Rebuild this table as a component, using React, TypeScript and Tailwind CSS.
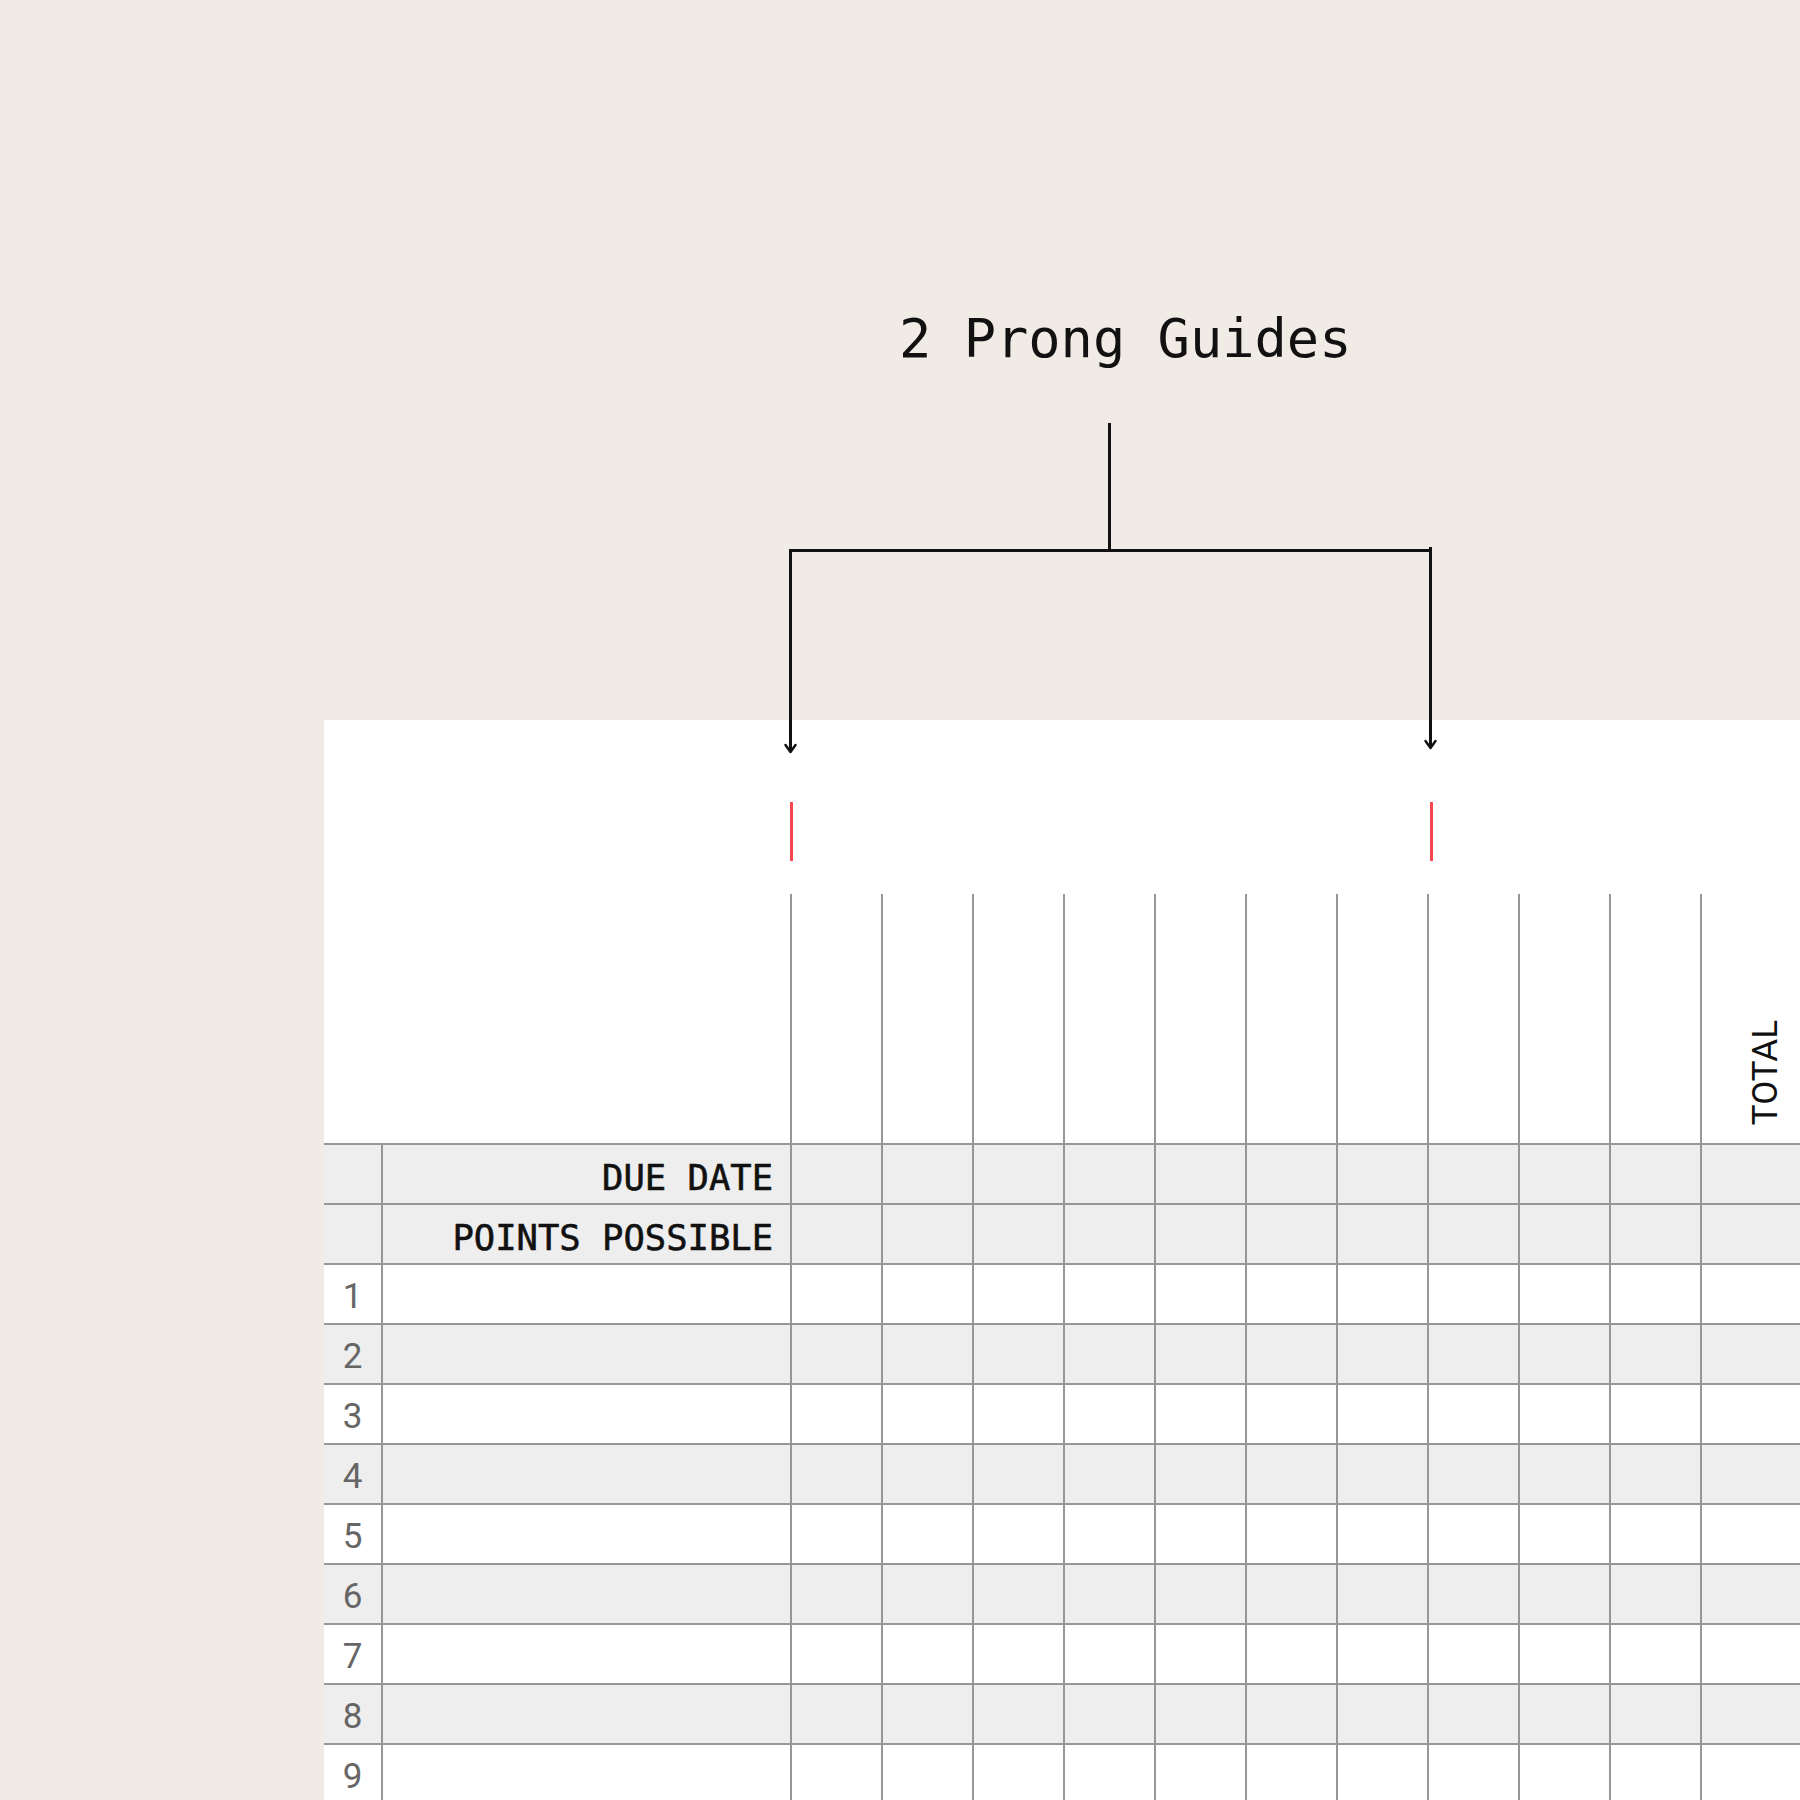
import { ReactNode } from "react";

const LINE = "border-[#979797]";
const dataCols = Array.from({ length: 11 }, (_, i) => i);
const numbers = [1, 2, 3, 4, 5, 6, 7, 8, 9];

// bracket with two arrows pointing at the guide marks
const Bracket = () => (
  <svg
    className="absolute left-0 top-0"
    width="1800"
    height="800"
    viewBox="0 0 1800 800"
    fill="none"
  >
    <g stroke="#111" strokeWidth="3">
      <line x1="1109.5" y1="423" x2="1109.5" y2="551" />
      <line x1="790" y1="550.5" x2="1431.5" y2="550.5" />
      <line x1="790.5" y1="549" x2="790.5" y2="751" />
      <line x1="1430.5" y1="547" x2="1430.5" y2="747" />
    </g>
    <g stroke="#111" strokeWidth="2.5" strokeLinecap="round" strokeLinejoin="round">
      <polyline points="785.5,745 790.5,752 795.5,745" />
      <polyline points="1425.5,741 1430.5,748 1435.5,741" />
    </g>
  </svg>
);

const Row = ({ gray, num, label }: { gray: boolean; num?: ReactNode; label?: string }) => (
  <div className={`flex h-[60px] shrink-0 border-t-2 ${LINE} ${gray ? "bg-[#efeeef]" : "bg-white"}`}>
    <div className="w-[57px] shrink-0 flex items-center justify-center font-['Roboto',sans-serif] text-[35px] leading-none text-[#666] pt-[4px]">
      {num}
    </div>
    <div
      className={`w-[409px] shrink-0 border-l-2 ${LINE} flex items-center justify-end pr-[17px] pt-[8px] font-['DejaVu_Sans_Mono',monospace] text-[35.5px] leading-none text-[#111] [-webkit-text-stroke:0.6px_#111]`}
    >
      {label}
    </div>
    {dataCols.map((c) => (
      <div key={c} className={`w-[91px] shrink-0 border-l-2 ${LINE}`} />
    ))}
    <div className="flex-1" />
  </div>
);

export default function App() {
  return (
    <div className="relative w-[1800px] h-[1800px] overflow-hidden bg-[#f0ece5] flex flex-col">
      <div className="h-[720px] shrink-0 pt-[312px] pl-[899px]">
        <div className="font-['DejaVu_Sans_Mono',monospace] text-[53.7px] leading-[53px] text-[#111] whitespace-nowrap">
          2 Prong Guides
        </div>
      </div>

      <div className="ml-[324px] flex-1 bg-white flex flex-col">
        <div className="h-[423px] shrink-0 flex">
          <div className="w-[466px] shrink-0" />
          {dataCols.map((c) => (
            <div key={c} className="w-[91px] shrink-0 flex flex-col">
              <div className="h-[174px] shrink-0 pt-[82px]">
                {c === 0 && <div className="w-[3px] h-[59px] bg-[#f5484f]" />}
                {c === 7 && <div className="ml-[3px] w-[3px] h-[59px] bg-[#f5484f]" />}
              </div>
              <div className={`flex-1 border-l-2 ${LINE} flex items-end justify-end pr-[8px] pb-[18px]`}>
                {c === 10 && (
                  <span className="[writing-mode:vertical-rl] rotate-180 font-['Roboto',sans-serif] font-normal text-[35px] leading-[35px] text-[#111]">
                    TOTAL
                  </span>
                )}
              </div>
            </div>
          ))}
          <div className="flex-1" />
        </div>

        <Row gray label="DUE DATE" />
        <Row gray label="POINTS POSSIBLE" />
        {numbers.map((n) => (
          <Row key={n} gray={n % 2 === 0} num={n} />
        ))}
      </div>

      <Bracket />
    </div>
  );
}
